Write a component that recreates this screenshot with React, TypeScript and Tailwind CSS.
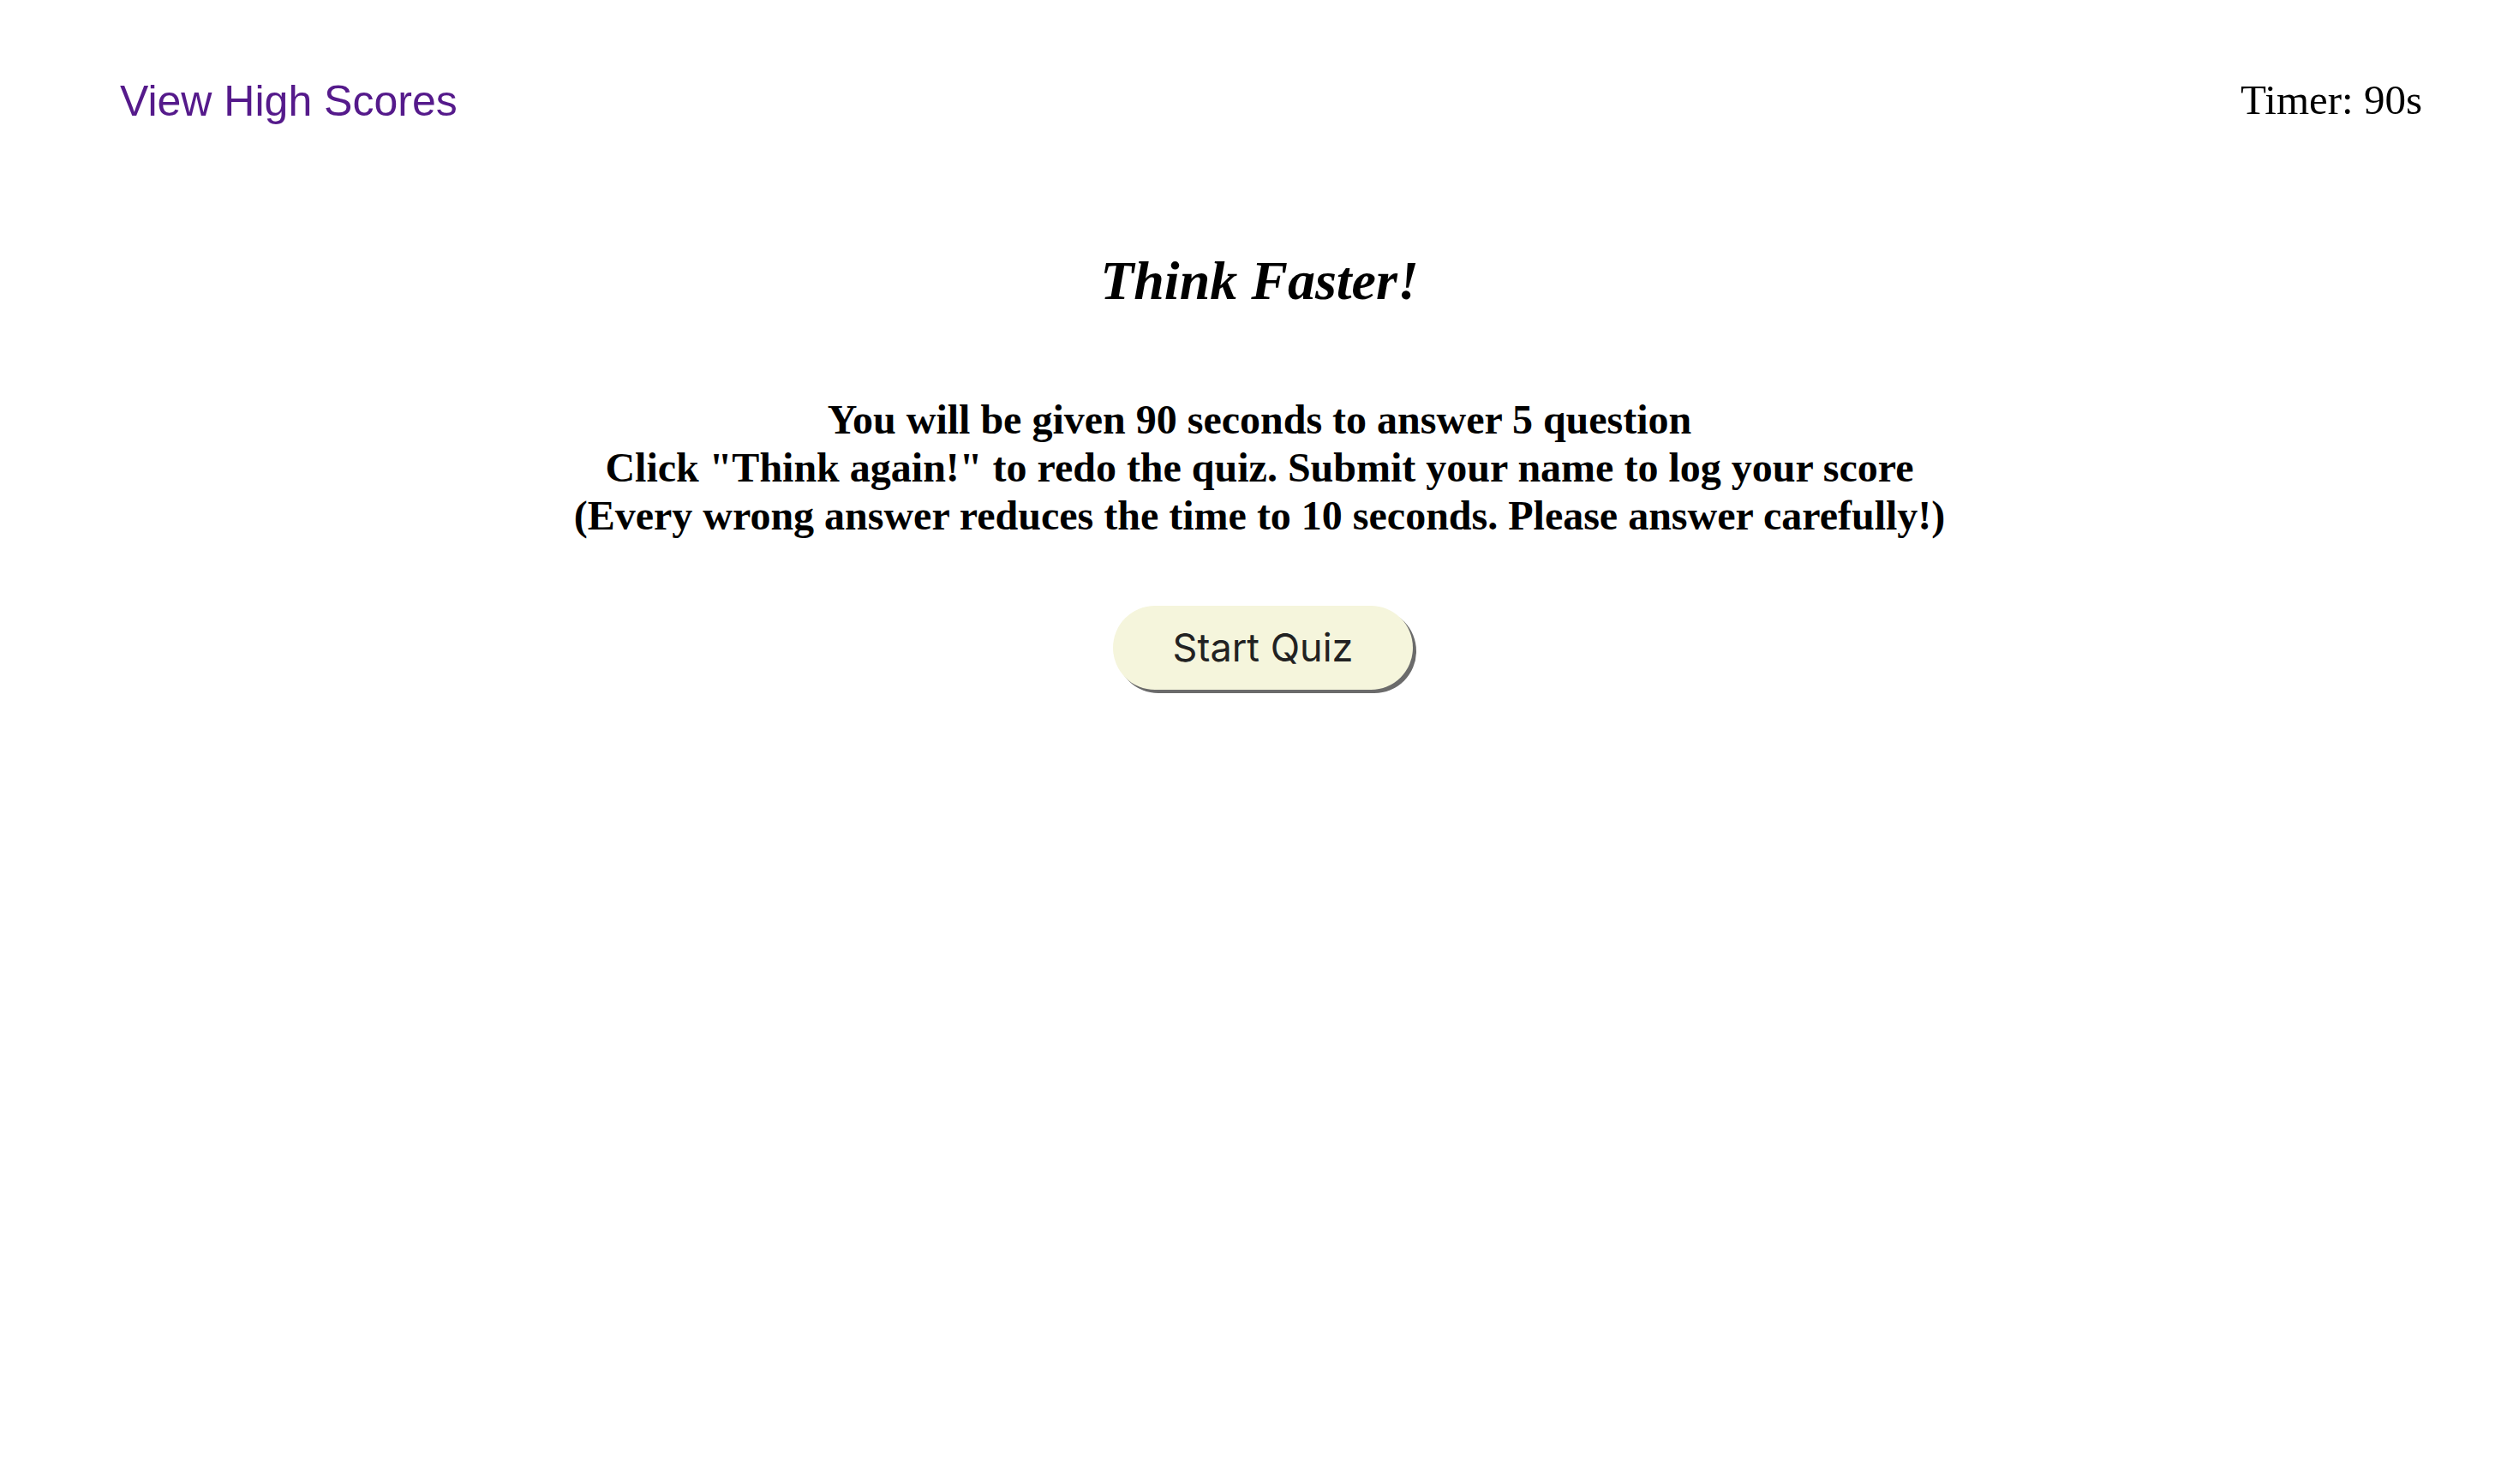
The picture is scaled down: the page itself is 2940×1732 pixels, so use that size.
import React from 'react';

const serif = "font-['Liberation_Serif','Times_New_Roman',serif]";

export default function App() {
  return (
    <div className="min-h-screen w-full bg-white text-black">
      <header className="flex items-start justify-between pl-[140px] pr-[113px] pt-[90px]">
        <a
          href="#"
          className="font-['Liberation_Sans',Arial,sans-serif] text-[50px] leading-[57px] text-[#551a8b]"
        >
          View High Scores
        </a>
        <div className={`${serif} text-[49px] leading-[54px]`}>Timer: 90s</div>
      </header>

      <main className="flex flex-col items-center">
        <h1 className={`${serif} mt-[144px] text-[64px] leading-[74px] font-bold italic`}>
          Think Faster!
        </h1>
        <h2 className={`${serif} mt-[97px] text-center text-[48px] leading-[56px] font-bold`}>
          You will be given 90 seconds to answer 5 question
          <br />
          Click "Think again!" to redo the quiz. Submit your name to log your score
          <br />
          (Every wrong answer reduces the time to 10 seconds. Please answer carefully!)
        </h2>
        <button className="ml-[8px] mt-[77px] h-[98px] w-[350px] rounded-full bg-[#f5f5dc] font-['Inter',sans-serif] text-[45px] text-[#222222] shadow-[4px_4px_0_#6b6b6b]">
          Start Quiz
        </button>
      </main>
    </div>
  );
}
